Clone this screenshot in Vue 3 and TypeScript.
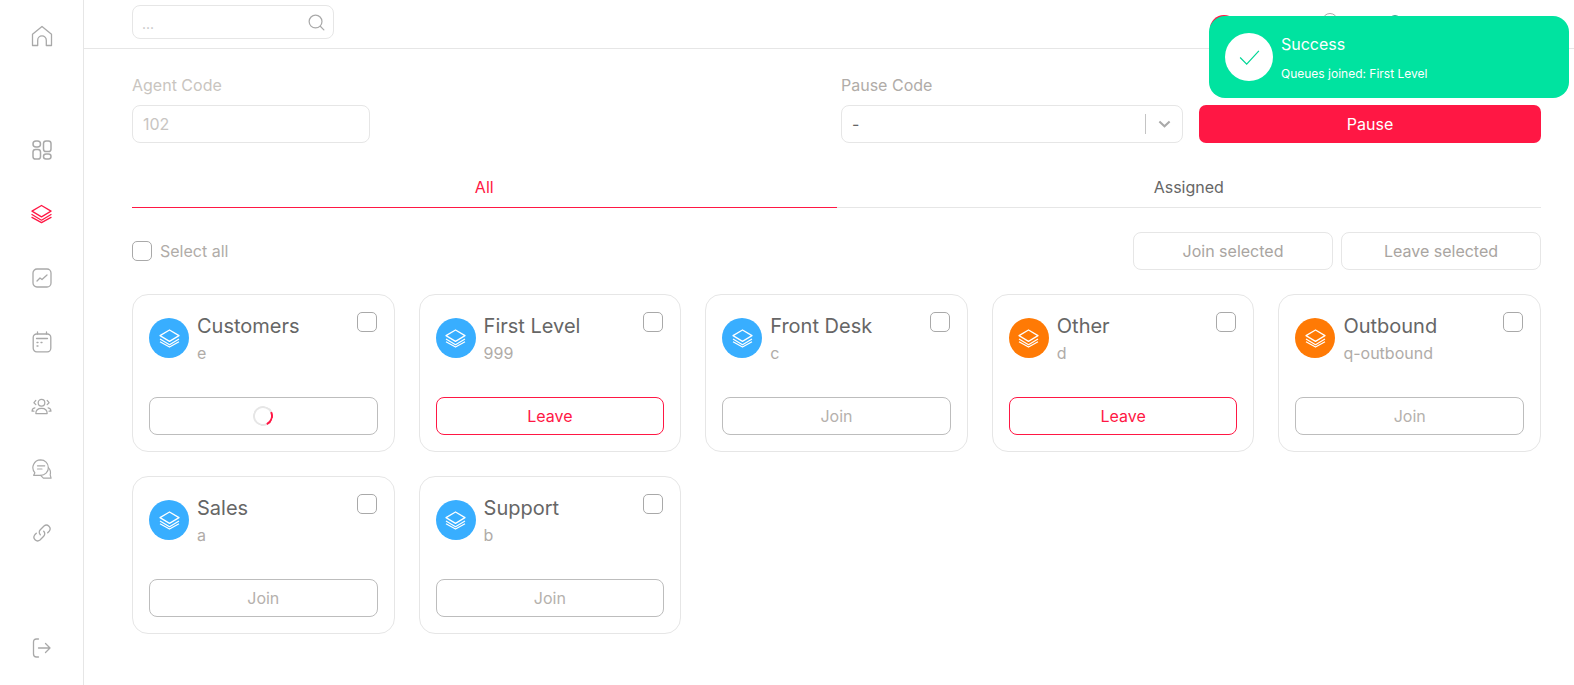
<script setup lang="ts">
interface Queue { name: string; code: string; color: 'blue' | 'orange'; state: 'join' | 'leave' | 'busy' }
const queues: Queue[] = [
  { name: 'Customers', code: 'e', color: 'blue', state: 'busy' },
  { name: 'First Level', code: '999', color: 'blue', state: 'leave' },
  { name: 'Front Desk', code: 'c', color: 'blue', state: 'join' },
  { name: 'Other', code: 'd', color: 'orange', state: 'leave' },
  { name: 'Outbound', code: 'q-outbound', color: 'orange', state: 'join' },
  { name: 'Sales', code: 'a', color: 'blue', state: 'join' },
  { name: 'Support', code: 'b', color: 'blue', state: 'join' },
]
</script>

<template>
  <div class="page">
    <aside class="side">
      <svg class="ico home" viewBox="0 0 22 22"><path d="M1.500 20.500V9.200L11 1.500l9.500 7.700v11.300h-5.200v-5.300a4.300 4.300 0 0 0-8.600 0v5.300z" /></svg>
      <svg class="ico apps" viewBox="0 0 20 20"><rect x="1" y="1" width="7.500" height="6" rx="3" /><rect x="11.500" y="1" width="7.500" height="10.500" rx="2.600" /><rect x="1" y="9.500" width="7.500" height="9.500" rx="2.600" /><rect x="11.500" y="14" width="7.500" height="5" rx="2.500" /></svg>
      <svg class="ico layers active" viewBox="0 0 22 20"><path d="M11 1 21 7l-10 6L1 7z" /><path d="M1 10.500l10 6 10-6" /><path d="M1 13.500l10 5.500 10-5.500" /></svg>
      <svg class="ico chart" viewBox="0 0 20 20"><rect x="1" y="1" width="18" height="18" rx="4" /><path d="M5 13l3-3 2 1.500L15 7" /></svg>
      <svg class="ico cal" viewBox="0 0 20 22"><rect x="1.200" y="3" width="17.600" height="17.800" rx="3.500" /><path d="M5.500 1v2M14.500 1v2M4.500 7.500h11M5 11.500h1M9 11.500h1M5 15h1" /></svg>
      <svg class="ico team" viewBox="0 0 22 18"><circle cx="11" cy="5" r="3.500" /><path d="M5 16.500c0-3.500 2.500-5.500 6-5.500s6 2 6 5.500z" /><path d="M5 2.500 3 5l2 2M17 2.500 19 5l-2 2M4 10.500c-2 .3-3 1.500-3 3.500h2M18 10.500c2 .3 3 1.500 3 3.500h-2" /></svg>
      <svg class="ico chat" viewBox="0 0 22 22"><path d="M9.500 1a8.500 8.500 0 0 1 8.500 8.500c0 4.700-3.800 8.500-8.500 8.500H1.800l1.400-2.800A8.500 8.500 0 0 1 9.500 1z" /><path d="M18 9.500c2 2 2.800 5 2 8l1 3.500h-8.500l-3-3" /><path d="M6 7.500h8M6 11h5" /></svg>
      <svg class="ico link" viewBox="0 0 20 20"><path d="M8.300 11.700a3.500 3.500 0 0 1 0-5L12 3a3.700 3.700 0 0 1 5.200 5.200l-1.500 1.500" /><path d="M11.700 8.300a3.500 3.500 0 0 1 0 5L8 17a3.700 3.700 0 0 1-5.200-5.200l1.500-1.500" /></svg>
      <svg class="ico exit" viewBox="0 0 20 20"><path d="M6.500 1H4.500C2.500 1 1.500 2 1.500 4v12c0 2 1 3 3 3h2" /><path d="M6.500 10H18M13.500 5.500 18 10l-4.500 4.500" /></svg>
    </aside>

    <div class="main">
      <header class="top">
        <div class="search">
          <span class="dots">...</span>
          <svg class="search-ico" viewBox="0 0 18 18"><circle cx="8" cy="8" r="6.800" /><path d="M13 13l3.800 3.800" /></svg>
        </div>
        <div class="top-right">
          <span class="dot red"></span>
          <span class="dot grey"></span>
          <span class="dot green"></span>
        </div>
      </header>

      <section class="content">
        <div class="form">
          <div class="field agent">
            <label class="flabel">Agent Code</label>
            <div class="input">102</div>
          </div>
          <div class="field pause">
            <label class="flabel">Pause Code</label>
            <div class="input select">
              <span class="val">-</span>
              <span class="sep"></span>
              <svg class="chev" viewBox="0 0 14 8"><path d="M1.500 1.200 7 6.500l5.500-5.300" /></svg>
            </div>
          </div>
          <button class="pause-btn">Pause</button>
        </div>

        <nav class="tabs">
          <div class="tab on">All</div>
          <div class="tab">Assigned</div>
        </nav>

        <div class="bar">
          <label class="sel"><span class="check"></span>Select all</label>
          <div class="bar-btns">
            <button class="ghost">Join selected</button>
            <button class="ghost">Leave selected</button>
          </div>
        </div>

        <div class="grid">
          <article v-for="q in queues" :key="q.name" class="card">
            <div class="card-top">
              <span class="badge" :class="q.color">
                <svg viewBox="0 0 22 20"><path d="M11 1 21 7l-10 6L1 7z" /><path d="M1 10.500l10 6 10-6" /><path d="M1 13.500l10 5.500 10-5.500" /></svg>
              </span>
              <div class="titles">
                <div class="name">{{ q.name }}</div>
                <div class="code">{{ q.code }}</div>
              </div>
              <span class="check card-check"></span>
            </div>
            <button class="act" :class="q.state">
              <span v-if="q.state === 'busy'" class="spin"></span>
              <template v-else>{{ q.state === 'leave' ? 'Leave' : 'Join' }}</template>
            </button>
          </article>
        </div>
      </section>
    </div>

    <div class="toast">
      <span class="toast-ico">
        <svg viewBox="0 0 22 16"><path d="M1 8l7 7L21 1" /></svg>
      </span>
      <div class="toast-text">
        <div class="toast-title">Success</div>
        <div class="toast-msg">Queues joined: First Level</div>
      </div>
    </div>
  </div>
</template>

<style>
html, body { margin: 0; background: #fff; }
</style>

<style scoped>
.page { display: flex; min-height: 685px; font-family: Inter, "Liberation Sans", sans-serif; color: #666; position: relative; overflow: hidden; }
button { font-family: inherit; cursor: pointer; background: #fff; }

.side { width: 83px; height: 685px; flex: none; border-right: 1px solid #e6e6e6; display: flex; flex-direction: column; align-items: center; box-sizing: content-box; position: relative; }
.ico { fill: none; stroke: #a9a9a9; stroke-width: 1.300; stroke-linejoin: round; stroke-linecap: round; display: block; flex: none; }
.ico.active { stroke: #ff1744; }
.home { width: 22px; height: 22px; margin-top: 25px; }
.apps { width: 20px; height: 20px; margin-top: 93px; stroke-width: 1.500; }
.layers { width: 21px; height: 20px; margin-top: 44px; }
.chart { width: 20px; height: 20px; margin-top: 44px; }
.cal { width: 20px; height: 22px; margin-top: 43px; }
.team { width: 21px; height: 17px; margin-top: 45px; }
.chat { width: 20px; height: 20px; margin-top: 44px; }
.link { width: 20px; height: 20px; margin-top: 44px; }
.exit { width: 20px; height: 20px; margin-top: 95px; }

.main { flex: 1; min-width: 0; }
.top { border-bottom: 1px solid #e6e6e6; display: flex; justify-content: space-between; padding: 5px 33px 0 48px; box-sizing: content-box; height: 43px; }
.search { height: 32px; border: 1px solid #e6e6e6; border-radius: 8px; display: flex; align-items: center; justify-content: space-between; padding: 0 8px 0 9px; box-sizing: content-box; width: 183px; }
.dots { font-size: 14px; color: #c4c4c4; margin-top: 3px; }
.search-ico { width: 17px; height: 17px; fill: none; stroke: #a9a9a9; stroke-width: 1.300; stroke-linecap: round; }
.top-right { display: flex; padding-right: 140px; }
.dot { border-radius: 50%; display: block; }
.dot.red { background: #ff1744; width: 28px; height: 28px; margin-top: 10px; margin-right: 84px; }
.dot.grey { border: 1px solid #aaa; width: 14px; height: 14px; margin-top: 8px; margin-right: 51px; }
.dot.green { background: #3fa58f; width: 12px; height: 12px; margin-top: 10px; }

.content { padding: 0 33px 0 48px; }
.form { display: flex; align-items: flex-end; padding-top: 26px; }
.field { display: flex; flex-direction: column; }
.agent { width: 238px; margin-right: 471px; }
.pause { width: 342px; margin-right: 16px; }
.flabel { font-size: 16px; line-height: 20px; color: #c9c5c0; margin-bottom: 10px; height: 20px; }
.pause .flabel { color: #b0aca8; }
.input { height: 38px; border: 1px solid #e6e6e6; border-radius: 8px; box-sizing: border-box; display: flex; align-items: center; padding: 0 10px; font-size: 16px; color: #c8c5c2; }
.select { padding: 0 11px 0 10px; color: #666; }
.val { flex: 1; }
.sep { width: 1px; height: 20px; background: #c4c4c4; margin-right: 12px; }
.chev { width: 13px; height: 8px; fill: none; stroke: #a9a9a9; stroke-width: 2.200; }
.pause-btn { width: 342px; height: 38px; border: 0; border-radius: 7px; background: #ff1744; color: #fff; font-size: 16px; }

.tabs { display: flex; margin-top: 27px; }
.tab { flex: 1; line-height: 34px; text-align: center; font-size: 16px; color: #666; border-bottom: 1px solid #e6e6e6; box-sizing: content-box; height: 37px; }
.tab.on { color: #ff1744; border-bottom-color: #ff1744; }

.bar { display: flex; justify-content: space-between; align-items: center; margin-top: 24px; height: 38px; }
.sel { display: flex; align-items: center; gap: 8px; font-size: 16px; color: #b0aca8; }
.check { width: 18px; height: 18px; border: 1px solid #a9a9a9; border-radius: 5px; display: block; flex: none; background: #fff; }
.card-check { margin-right: 1px; }
.bar-btns { display: flex; gap: 8px; }
.ghost { width: 200px; height: 38px; border: 1px solid #e6e6e6; border-radius: 8px; font-size: 16px; color: #a9a5a1; }

.grid { display: grid; grid-template-columns: repeat(5, 1fr); gap: 24px; margin-top: 24px; }
.card { height: 158px; border: 1px solid #e6e6e6; border-radius: 16px; box-sizing: border-box; padding: 16px; display: flex; flex-direction: column; justify-content: space-between; }
.card-top { display: flex; align-items: flex-start; padding-top: 1px; }
.badge { width: 40px; height: 40px; border-radius: 50%; flex: none; display: flex; align-items: center; justify-content: center; margin-top: 6px; margin-right: 8px; }
.badge.blue { background: #38aeff; }
.badge.orange { background: #ff7a05; }
.badge svg { width: 21px; height: 19px; fill: none; stroke: #fff; stroke-width: 1.300; stroke-linejoin: round; }
.titles { flex: 1; min-width: 0; }
.name { font-size: 20px; line-height: 24px; color: #666; margin-top: 2px; }
.code { font-size: 16px; line-height: 20px; color: #b0aca8; margin-top: 5px; }
.act { height: 38px; width: 100%; border: 1px solid #bdbdbd; border-radius: 8px; font-size: 16px; color: #b5b1ad; display: flex; align-items: center; justify-content: center; }
.act.leave { border-color: #ff1744; color: #ff1744; }
.spin { width: 20px; height: 20px; border-radius: 50%; box-sizing: border-box; border: 2px solid #e6e6e6; border-right-color: #ff1744; transform: rotate(20deg); display: block; }

.toast { position: absolute; left: 1209px; top: 16px; width: 360px; height: 82px; background: #00e3a0; border-radius: 16px; display: flex; align-items: center; padding-left: 16px; box-sizing: border-box; color: #fff; }
.toast-ico { width: 48px; height: 48px; border-radius: 50%; background: #fff; display: flex; align-items: center; justify-content: center; margin-right: 8px; flex: none; }
.toast-ico svg { width: 21px; height: 15px; fill: none; stroke: #00d696; stroke-width: 1.300; }
.toast-text { padding-top: 1px; }
.toast-title { font-size: 16px; line-height: 20px; }
.toast-msg { font-size: 12px; line-height: 16px; margin-top: 12px; }
</style>
